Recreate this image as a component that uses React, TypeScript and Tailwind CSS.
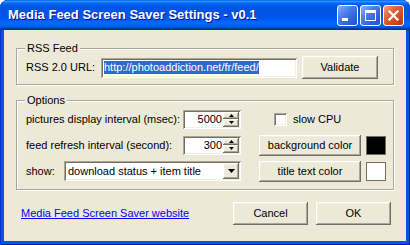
import React from 'react';

const raised = 'shadow-[inset_-1px_-1px_#716F64,inset_1px_1px_#FFFFFF,inset_-2px_-2px_#ACA899,inset_2px_2px_#F1EFE2]';
const sunken = 'shadow-[inset_1px_1px_#ACA899,inset_-1px_-1px_#FFFFFF,inset_2px_2px_#716F64,inset_-2px_-2px_#F1EFE2]';

function Button({ label, className = '' }: { label: string; className?: string }) {
  return (
    <div className={`flex items-center justify-center bg-[#ECE9D8] ${raised} ${className}`}>
      {label}
    </div>
  );
}

function GroupBox({ title, className = '', children }: { title: string; className?: string; children: React.ReactNode }) {
  return (
    <div className={`relative border border-[#ACA899] shadow-[inset_1px_1px_#FFFFFF,1px_1px_#FFFFFF] ${className}`}>
      <span className="absolute -top-[7px] left-[8px] bg-[#ECE9D8] px-[2px] leading-[13px]">{title}</span>
      {children}
    </div>
  );
}

function Arrow({ dir }: { dir: 'up' | 'down' }) {
  return (
    <svg width="5" height="3" viewBox="0 0 5 3">
      {dir === 'up' ? <path d="M2.5 0 L5 3 L0 3 Z" fill="#000" /> : <path d="M0 0 L5 0 L2.5 3 Z" fill="#000" />}
    </svg>
  );
}

function Spin({ value }: { value: string }) {
  return (
    <div className={`flex h-[19px] w-[58px] bg-white p-[2px] ${sunken}`}>
      <div className="flex flex-1 items-center justify-end pr-[1px] leading-none">{value}</div>
      <div className="flex w-[16px] flex-col">
        <div className={`flex flex-1 items-center justify-center bg-[#ECE9D8] ${raised}`}>
          <Arrow dir="up" />
        </div>
        <div className={`flex flex-1 items-center justify-center bg-[#ECE9D8] ${raised}`}>
          <Arrow dir="down" />
        </div>
      </div>
    </div>
  );
}

function TitleButton({ kind }: { kind: 'min' | 'max' | 'close' }) {
  const bg =
    kind === 'close'
      ? 'bg-[linear-gradient(135deg,#F2A68A_0%,#E2643A_35%,#D04A1C_70%,#B83510_100%)]'
      : 'bg-[linear-gradient(135deg,#8AB2F8_0%,#4A82EE_35%,#2F63DC_70%,#2452C8_100%)]';
  return (
    <div className={`flex h-[21px] w-[21px] items-center justify-center rounded-[3px] border border-white ${bg}`}>
      <svg width="13" height="13" viewBox="0 0 13 13">
        {kind === 'min' && <rect x="1" y="9" width="6" height="3" fill="#fff" />}
        {kind === 'max' && (
          <>
            <rect x="1.5" y="1.5" width="10" height="10" fill="none" stroke="#fff" strokeWidth="1" />
            <rect x="1" y="1" width="11" height="3" fill="#fff" />
          </>
        )}
        {kind === 'close' && <path d="M2.5 2.5 L10.5 10.5 M10.5 2.5 L2.5 10.5" stroke="#fff" strokeWidth="2.2" strokeLinecap="square" />}
      </svg>
    </div>
  );
}

export default function App() {
  return (
    <div className="h-[245px] w-[410px] bg-white font-['Liberation_Sans',Arial,sans-serif] text-[11px] text-black">
      <div className="flex h-full flex-col rounded-t-[8px] bg-[#0855DD] shadow-[inset_1px_0_#0831D9,inset_-1px_0_#001EA0,inset_0_-1px_#001EA0]">
        {/* title bar */}
        <div className="flex h-[30px] items-center rounded-t-[8px] bg-[linear-gradient(to_bottom,#0058EE_0%,#3593FF_4%,#288EFF_6%,#127DFF_8%,#036FFC_10%,#0262EE_14%,#0057E5_20%,#0054E3_24%,#0055EB_56%,#005BF5_66%,#026AFE_76%,#0062EF_86%,#0052D6_92%,#0040AB_94%,#003092_100%)] pl-[8px] pr-[6px]">
          <span className="text-[13px] font-bold text-white [text-shadow:1px_1px_#0F1089]">Media Feed Screen Saver Settings - v0.1</span>
          <div className="ml-auto flex gap-[2px]">
            <TitleButton kind="min" />
            <TitleButton kind="max" />
            <TitleButton kind="close" />
          </div>
        </div>

        {/* client area */}
        <div className="mx-[4px] mb-[4px] flex flex-1 flex-col bg-[#ECE9D8] px-[12px] pt-[18px]">
          <GroupBox title="RSS Feed" className="h-[37px]">
            <div className="flex items-center pl-[9px] pt-[7px]">
              <span className="w-[75px]">RSS 2.0 URL:</span>
              <div className={`flex h-[20px] w-[196px] items-center bg-white px-[3px] ${sunken}`}>
                <span className="bg-[#316AC5] leading-[13px] text-white">http://photoaddiction.net/fr/feed/</span>
              </div>
              <Button label="Validate" className="ml-[5px] h-[23px] w-[76px]" />
            </div>
          </GroupBox>

          <GroupBox title="Options" className="mt-[15px] h-[90px]">
            <div className="flex flex-col gap-[4px] pl-[9px] pt-[7px]">
              <div className="flex h-[22px] items-center">
                <span className="w-[157px]">pictures display interval (msec):</span>
                <Spin value="5000" />
                <div className={`ml-[33px] h-[13px] w-[13px] bg-white ${sunken}`} />
                <span className="ml-[6px]">slow CPU</span>
              </div>
              <div className="flex h-[22px] items-center">
                <span className="w-[157px]">feed refresh interval (second):</span>
                <Spin value="300" />
                <Button label="background color" className="ml-[18px] h-[21px] w-[102px]" />
                <div className="ml-[5px] h-[19px] w-[20px] border border-[#716F64] bg-black" />
              </div>
              <div className="flex h-[22px] items-center">
                <span className="w-[38px]">show:</span>
                <div className={`flex h-[20px] w-[177px] bg-white p-[2px] ${sunken}`}>
                  <div className="flex flex-1 items-center pl-[2px]">download status + item title</div>
                  <div className={`flex w-[16px] items-center justify-center bg-[#ECE9D8] ${raised}`}>
                    <svg width="7" height="4" viewBox="0 0 7 4">
                      <path d="M0 0 L7 0 L3.5 4 Z" fill="#000" />
                    </svg>
                  </div>
                </div>
                <Button label="title text color" className="ml-[18px] h-[21px] w-[102px]" />
                <div className="ml-[5px] h-[19px] w-[20px] border border-[#716F64] bg-white" />
              </div>
            </div>
          </GroupBox>

          <div className="mt-[12px] flex items-center">
            <span className="ml-[5px] text-[#0000FF] underline">Media Feed Screen Saver website</span>
            <div className="ml-auto mr-[3px] flex gap-[8px]">
              <Button label="Cancel" className="h-[23px] w-[75px]" />
              <Button label="OK" className="h-[23px] w-[75px]" />
            </div>
          </div>
        </div>
      </div>
    </div>
  );
}
